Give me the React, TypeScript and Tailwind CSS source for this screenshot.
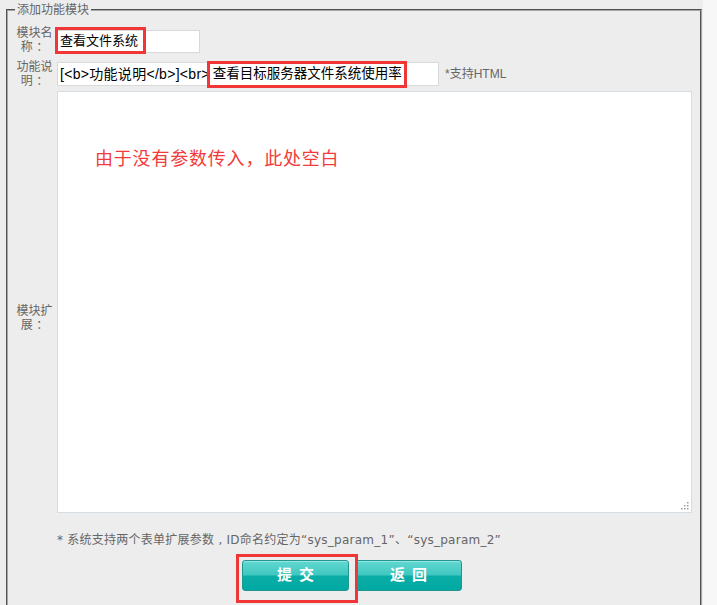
import React from "react";

const cjk = { fontFamily: '"Liberation Sans", "Noto Sans CJK SC", sans-serif' };
const wide = { fontFamily: '"DejaVu Sans", "Noto Sans CJK SC", sans-serif' };

function Label({ top, bottom }: { top: string; bottom: string }) {
  return (
    <div className="w-[45px] shrink-0 text-center text-[12px] leading-[14px] text-[#666]">
      <div>{top}</div>
      <div>{bottom}</div>
    </div>
  );
}

function ResizeGrip() {
  return (
    <svg width="9" height="9" viewBox="0 0 9 9" className="absolute bottom-[2px] right-[2px]">
      {[
        [7, 1],
        [7, 4],
        [4, 4],
        [7, 7],
        [4, 7],
        [1, 7],
      ].map(([x, y], i) => (
        <rect key={i} x={x} y={y} width="1.5" height="1.5" fill="#9a9a9a" />
      ))}
    </svg>
  );
}

function TealButton({ text }: { text: string }) {
  return (
    <button
      type="button"
      className="relative h-[31px] w-[107px] overflow-hidden rounded-[3px] border border-[#1f9690] bg-[linear-gradient(to_bottom,#62d8d2_0%,#3fc7c0_48%,#0aada6_52%,#00a9a2_100%)] text-[15px] font-bold tracking-[7px] text-white shadow-[inset_0_1px_0_rgba(255,255,255,0.35)]"
    >
      <span className="pl-[7px]">{text}</span>
    </button>
  );
}

export default function App() {
  return (
    <div className="relative h-[605px] w-[717px] overflow-hidden bg-[#f7f7f7]" style={cjk}>
      <div className="h-[605px] w-[703px] bg-[#ededed] pt-[2px] pl-[6px]">
        <fieldset className="h-[640px] w-[696px] border-2 border-[#a6a6a6] pl-[4px] pr-[8px] pt-[6px] [border-style:groove]">
          <legend className="ml-[3px] px-[2px] text-[12px] leading-[16px] text-[#666]">添加功能模块</legend>

          {/* 模块名称 */}
          <div className="flex h-[32px] items-center">
            <Label top="模块名" bottom="称 ：" />
            <div className="mt-[2px] flex h-[23px] w-[143px] items-center border border-[#d9d9d9] bg-white pl-[2px] text-[13px] text-black">
              查看文件系统
            </div>
          </div>

          {/* 功能说明 */}
          <div className="flex h-[35px] items-center">
            <Label top="功能说" bottom="明 ：" />
            <div className="mt-[1px] flex h-[24px] w-[382px] items-center border border-[#d9d9d9] bg-white pl-[2px] text-[14px] whitespace-nowrap text-black">
              <span className="tracking-[0.3px]">[&lt;b&gt;功能说明&lt;/b&gt;]&lt;br&gt;</span>
              <span className="ml-[3px] text-[13.5px]">查看目标服务器文件系统使用率</span>
            </div>
            <span className="ml-[6px] mt-[1px] text-[12px] text-[#666]">*支持HTML</span>
          </div>

          {/* 模块扩展 */}
          <div className="flex items-start">
            <div className="mt-[213px]">
              <Label top="模块扩" bottom="展 ：" />
            </div>
            <div className="relative h-[422px] w-[635px] border border-[#d6dde3] bg-white pl-[37px] pt-[55px] text-[18px] leading-[24px] tracking-[0.8px] text-[#f23b3b]">
              由于没有参数传入，此处空白
              <ResizeGrip />
            </div>
          </div>

          <p className="ml-[45px] mt-[19px] text-[12px] leading-[16px] tracking-[0.25px] text-[#666]" style={wide}>
            * 系统支持两个表单扩展参数 , ID命名约定为“sys_param_1”、“sys_param_2”
          </p>

          <div className="mt-[12px] flex justify-center gap-[6px]">
            <TealButton text="提交" />
            <TealButton text="返回" />
          </div>
        </fieldset>
      </div>

      {/* red annotation boxes */}
      <div className="absolute left-[55px] top-[27px] h-[27px] w-[91px] border-[3px] border-[#f03636]" />
      <div className="absolute left-[207px] top-[61px] h-[27px] w-[200px] border-[3px] border-[#f03636]" />
      <div className="absolute left-[236px] top-[554px] h-[49px] w-[122px] border-[3px] border-[#f03636]" />
    </div>
  );
}
